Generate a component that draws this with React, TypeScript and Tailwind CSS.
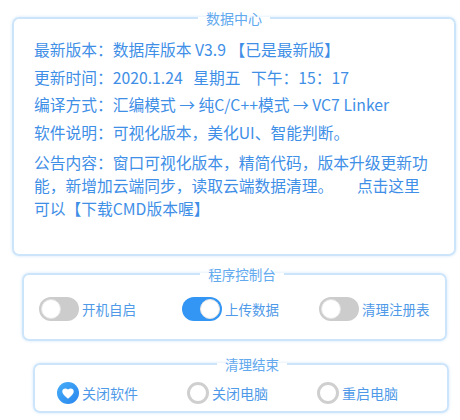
import React from "react";

const font = { fontFamily: '"Noto Sans CJK SC", "Noto Sans", sans-serif' };

function Toggle({ on, label }: { on: boolean; label: string }) {
  return (
    <div className="flex items-center">
      <div
        className={
          on
            ? "flex h-[24px] w-[40px] items-center justify-end rounded-full bg-[#3396f5] px-[2px]"
            : "flex h-[24px] w-[40px] items-center justify-start rounded-full bg-[#cccccc] px-[2px]"
        }
      >
        <div className="h-[20px] w-[20px] rounded-full border border-[#e4e4e4] bg-white" />
      </div>
      <span className="ml-[3px] text-[13.5px] leading-[20px] text-[#4f9ae8]">{label}</span>
    </div>
  );
}

function Radio({ checked, label }: { checked: boolean; label: string }) {
  return (
    <div className="flex items-center">
      {checked ? (
        <div className="flex h-[22px] w-[22px] items-center justify-center rounded-full bg-gradient-to-br from-[#46adf7] to-[#2a86ee]">
          <svg width="12" height="11" viewBox="0 0 24 22">
            <path
              d="M12 21.5 L10.3 19.9 C4.2 14.4 0.5 11 0.5 6.8 C0.5 3.4 3.1 0.8 6.5 0.8 C8.4 0.8 10.3 1.7 12 3.1 C13.7 1.7 15.6 0.8 17.5 0.8 C20.9 0.8 23.5 3.4 23.5 6.8 C23.5 11 19.8 14.4 13.7 19.9 Z"
              fill="#ffffff"
            />
          </svg>
        </div>
      ) : (
        <div className="h-[22px] w-[22px] rounded-full border-[3px] border-[#cfcfcf] bg-white" />
      )}
      <span className="ml-[3px] text-[14px] leading-[20px] text-[#4f9ae8]">{label}</span>
    </div>
  );
}

export default function App() {
  return (
    <div className="h-[420px] w-[460px] bg-white pt-[8px]" style={font}>
      <fieldset className="ml-[12px] h-[248px] w-[443px] rounded-[7px] border-2 border-[#cde5fb] px-[20px] pt-[8px] shadow-[0_0_3px_rgba(150,200,245,0.45)]">
        <legend className="mx-auto px-[8px] text-[14px] leading-[20px] text-[#62a9ee]">数据中心</legend>
        <div className="w-[400px] text-[15.75px] text-[#3f8fe7]">
          <div className="leading-[27.5px] whitespace-pre">
            <div>最新版本：数据库版本 V3.9 【已是最新版】</div>
            <div>更新时间：2020.1.24   星期五   下午：15：17</div>
            <div>编译方式：汇编模式 → 纯C/C++模式 → VC7 Linker</div>
            <div>软件说明：可视化版本，美化UI、智能判断。</div>
          </div>
          <div className="mt-[5px] leading-[23px]">
            公告内容：窗口可视化版本，精简代码，版本升级更新功能，新增加云端同步，读取云端数据清理。{"\u3000\u3000"}点击这里可以【下载CMD版本喔】
          </div>
        </div>
      </fieldset>

      <fieldset className="ml-[22px] mt-[8px] h-[77px] w-[425px] rounded-[7px] border-2 border-[#cde5fb] pl-[15px] pt-[13px] shadow-[0_0_3px_rgba(150,200,245,0.45)]">
        <legend className="mx-auto px-[8px] text-[13.5px] leading-[20px] text-[#62a9ee]">程序控制台</legend>
        <div className="flex items-center">
          <Toggle on={false} label="开机自启" />
          <div className="ml-[46px]">
            <Toggle on={true} label="上传数据" />
          </div>
          <div className="ml-[40px]">
            <Toggle on={false} label="清理注册表" />
          </div>
        </div>
      </fieldset>

      <fieldset className="ml-[33px] mt-[13px] h-[59px] w-[403px] rounded-[7px] border-2 border-[#cde5fb] pl-[22px] pt-[8px] shadow-[0_0_3px_rgba(150,200,245,0.45)]">
        <legend className="mx-auto px-[8px] text-[13.5px] leading-[20px] text-[#62a9ee]">清理结束</legend>
        <div className="flex items-center">
          <div className="w-[130px]">
            <Radio checked={true} label="关闭软件" />
          </div>
          <div className="w-[130px]">
            <Radio checked={false} label="关闭电脑" />
          </div>
          <div className="w-[130px]">
            <Radio checked={false} label="重启电脑" />
          </div>
        </div>
      </fieldset>
    </div>
  );
}
